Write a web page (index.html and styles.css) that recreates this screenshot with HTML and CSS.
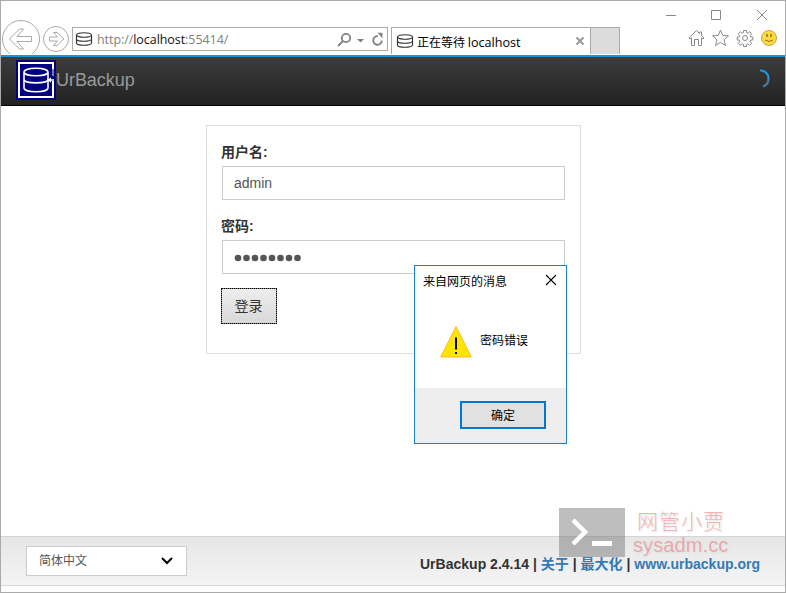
FILE: index.html
```html
<!DOCTYPE html>
<html lang="zh-CN">
<head>
<meta charset="utf-8">
<title>UrBackup</title>
<link rel="stylesheet" href="styles.css">
</head>
<body>
<svg class="defs" width="0" height="0">
  <symbol id="disk" viewBox="0 0 18 16">
    <path d="M1.500 4C1.500 1 16.500 1 16.500 4S1.500 7 1.500 4V12C1.500 15 16.500 15 16.500 12V4M1.500 8C1.500 11 16.500 11 16.500 8" fill="none" stroke="currentColor" stroke-width="1.200"/>
  </symbol>
</svg>
<div class="window">
  <div class="titlebar">
    <svg width="110" height="27" viewBox="0 0 110 27" fill="none" stroke="#888">
      <path d="M7 15.500h10M52.500 10.500h9v9h-9zM98 10l10 10M108 10l-10 10"/>
    </svg>
  </div>
  <div class="toolbar">
    <svg class="nav-buttons" width="71" height="35" viewBox="0 0 71 35" fill="none" stroke="#aaa">
      <circle cx="20" cy="19" r="18.500"/>
      <circle cx="55" cy="19" r="12.500"/>
      <path d="M8.500 19L18.500 9h4l-6.500 7.500h14.500v5H16l6.500 7.500h-4zM48.500 17h8l-4-4.500h3.500l7 6.500-7 6.500h-3.500l4-4.500h-8z"/>
    </svg>
    <div class="address">
      <svg class="disk-icon" width="18" height="16"><use href="#disk"/></svg>
      <span class="url">http://<b>localhost</b>:55414/</span>
      <svg class="address-tools" width="50" height="18" viewBox="0 0 50 18" fill="none" stroke="#808080" stroke-width="1.800">
        <circle cx="10" cy="7" r="4.200"/><path d="M7 10l-5 5"/>
        <path d="M21 8h7l-3.500 3.500z" fill="#808080" stroke="none"/>
        <path d="M42 5.200a4.300 4.300 0 1 0 3.800 4.300"/><path d="M41.500 1.500l5 .5v5.500z" fill="#808080" stroke="none"/>
      </svg>
    </div>
    <div class="tab">
      <svg class="disk-icon" width="18" height="16"><use href="#disk"/></svg>
      <span class="tab-title">正在等待 <i>localhost</i></span>
      <svg class="tab-close" width="10" height="10" viewBox="0 0 10 10" stroke="#999" stroke-width="2"><path d="M1.500 1.500l7 7M8.500 1.500l-7 7"/></svg>
    </div>
    <div class="new-tab"></div>
    <svg class="tools" width="92" height="20" viewBox="0 0 92 20" fill="none" stroke="#888">
      <path d="M1 10L8.500 2.500l3 3V4h2v3.500L16 10l-1 1-1.500-1v7.500h-3v-6h-4v6h-3V10L2 11z"/>
      <path d="M32.500 2l2.300 5.500 5.700.3-4.500 4 1.500 5.700-5-3.200-5 3.200 1.500-5.700-4.500-4 5.700-.3z"/>
      <circle cx="57" cy="10" r="2.500"/>
      <path d="M55.500 2.500h3v2l1.500.7 1.700-1.500 2 2-1.500 1.800.6 1.500h2v3h-2l-.6 1.500 1.500 1.800-2 2-1.700-1.500-1.500.7v2h-3v-2l-1.500-.7-1.700 1.500-2-2 1.500-1.800-.6-1.500h-2V9h2l.6-1.500-1.500-1.800 2-2L54 5.200l1.500-.7z"/>
      <circle cx="81" cy="10" r="7.500" fill="#ffda3f" stroke="#c8a24a"/>
      <path d="M79 6v3M83 6v3" stroke="#8b6d28" stroke-width="1.500"/><path d="M77 12q4 3 8 0" stroke="#8b6d28"/>
    </svg>
  </div>
  <header class="navbar">
    <svg class="logo" width="40" height="40" viewBox="0 0 40 40">
      <path fill="#000080" d="M0 0h40v40H0z"/>
      <path d="M37 21v16H3V3h34v7" fill="none" stroke="#fff" stroke-width="2"/>
      <path d="M36 9h2v7h-2z" fill="#7777bd"/>
      <path d="M8 12C8 7 32 7 32 12S8 17 8 12V28C8 33 32 33 32 28V12M8 19.500C8 24 32 24 32 19.500M32 20h6" fill="none" stroke="#fff" stroke-width="1.600"/>
      <path d="M31 20l4-2.500v5z" fill="#fff"/>
    </svg>
    <span class="brand">UrBackup</span>
    <svg class="spinner" width="14" height="20" viewBox="0 0 14 20" fill="none" stroke-width="2.200"><path d="M2 1.500A8 8 0 0 1 10.500 10" stroke="#2196dc"/><path d="M10.500 10A8 8 0 0 1 5 17.500" stroke="#4779a4"/></svg>
  </header>
  <main class="content">
    <form class="login">
      <label>用户名:</label>
      <div class="field">admin</div>
      <label>密码:</label>
      <div class="field password"><svg width="70" height="8" viewBox="0 0 70 8" fill="#555"><circle cx="4" cy="4" r="3.300"/><circle cx="12.500" cy="4" r="3.300"/><circle cx="21" cy="4" r="3.300"/><circle cx="29.500" cy="4" r="3.300"/><circle cx="38" cy="4" r="3.300"/><circle cx="46.500" cy="4" r="3.300"/><circle cx="55" cy="4" r="3.300"/><circle cx="63.500" cy="4" r="3.300"/></svg></div>
      <button class="submit" type="button">登录</button>
    </form>
  </main>
  <footer class="footer">
    <div class="language"><span>简体中文</span><svg width="12" height="8" viewBox="0 0 12 8" fill="none" stroke="#000" stroke-width="2"><path d="M1 1l5 5 5-5"/></svg></div>
    <div class="links">UrBackup 2.4.14 | <a>关于</a> | <a>最大化</a> | <a>www.urbackup.org</a></div>
  </footer>
  <div class="watermark">
    <svg width="66" height="49" viewBox="0 0 66 49"><path fill="#777" fill-opacity=".48" d="M0 0h66v49H0z"/><path d="M14 12l12 12-12 12" fill="none" stroke="#fff" stroke-width="4.500"/><path d="M33 33h20v5H33z" fill="#fff"/></svg>
    <div class="watermark-text"><span class="wm-name">网管小贾</span><span class="wm-site">sysadm.cc</span></div>
  </div>
  <div class="dialog">
    <div class="dialog-title"><span>来自网页的消息</span><svg width="12" height="12" viewBox="0 0 12 12" stroke="#000" stroke-width="1.100"><path d="M1 1l10 10M11 1L1 11"/></svg></div>
    <div class="dialog-body">
      <svg width="32" height="33" viewBox="0 0 32 33"><path d="M16 1.500L31.300 32H.7z" fill="#ffe500" stroke="#fdb924"/><path d="M15 12.500h2v12h-2zM15 27h2v2h-2z"/></svg>
      <span>密码错误</span>
    </div>
    <div class="dialog-footer"><button class="ok" type="button">确定</button></div>
  </div>
</div>
</body>
</html>
```
FILE: styles.css
```css
* { box-sizing: border-box; }
body { margin: 0; width: 786px; height: 593px; overflow: hidden; background: #fff; font-family: "Liberation Sans", "Noto Sans CJK SC", sans-serif; font-size: 14px; color: #333; }
svg { display: block; flex: none; }
.defs { position: absolute; }
.window { position: relative; width: 786px; height: 593px; border: 1px solid #aaa; display: flex; flex-direction: column; background: #fff; }
.titlebar { height: 26px; display: flex; justify-content: flex-end; padding: 0 16px 0 0; flex: none; }
.titlebar svg { margin-top: -1px; }
.toolbar { height: 28px; flex: none; display: flex; align-items: flex-start; }
.nav-buttons { height: 35px; margin: -7px 0 0; clip-path: inset(0 0 1px 0); }
.address { width: 316px; height: 24px; border: 1px solid #aaa; display: flex; align-items: center; padding: 0 1px 0 2px; margin-right: 3px; }
.disk-icon { color: #333; }
.url { margin: 2px 0 0 4px; font: 12.5px/20px "Open Sans", sans-serif; color: #808080; letter-spacing: -0.06px; white-space: nowrap; }
.url b { font-weight: 400; color: #111; }
.address-tools { margin: 1px 0 0 auto; }
.tab { width: 200px; height: 27px; border: 1px solid #aaa; border-bottom: 0; display: flex; align-items: center; padding: 0 5px 0 4px; }
.tab-title { margin: 1px 0 0 3px; font: 12px/20px "Noto Sans CJK SC", sans-serif; color: #000; white-space: nowrap; }
.tab-title i { font: 12.6px "Open Sans", sans-serif; }
.tab-close { margin-left: auto; }
.new-tab { width: 29px; height: 27px; background: #dcdcdc; border: 1px solid #aaa; border-width: 1px 1px 0 0; }
.tools { margin: 1px 5px 0 auto; width: 92px; }
.navbar { height: 51px; flex: none; display: flex; align-items: flex-start; border-top: 2px solid #1c94d8; border-bottom: 1px solid #000; background: linear-gradient(#3c3c3c, #222); padding: 3px 13px 0 15px; }
.brand { font-size: 18px; line-height: 40px; color: #999; letter-spacing: -0.05px; }
.spinner { margin: 9px 0 0 auto; }
.content { flex: 1; padding: 19px 0 0 205px; }
.login { width: 375px; height: 229px; border: 1px solid #ddd; padding: 16px 15px 0; }
.login label { display: block; font-weight: 700; line-height: 20px; height: 24px; margin-left: -1px; }
.field { height: 34px; border: 1px solid #ccc; padding: 0 11px; line-height: 32px; color: #555; margin-bottom: 16px; }
.password { display: flex; align-items: center; margin-bottom: 14px; padding-top: 2px; }
.submit { display: block; width: 56px; height: 36px; margin-left: -1px; border: 1px solid #777; outline: 1px dotted #000; outline-offset: -1px; background: linear-gradient(#eee, #d8d8d8); font: 14px/34px "Liberation Sans", "Noto Sans CJK SC", sans-serif; color: #333; padding: 0 1px 0 0; }
.footer { height: 50px; flex: none; margin-bottom: 6px; border: 1px solid #d4d4d4; border-width: 1px 0; background: linear-gradient(#e6e6e6, #f4f4f4); display: flex; justify-content: space-between; padding: 9px 25px 0; }
.language { width: 161px; height: 30px; border: 1px solid #ccc; background: #fff; display: flex; align-items: center; justify-content: space-between; padding: 0 13px 0 12px; font-size: 12px; color: #555; }
.language span { margin-top: -3px; }
.links { font-weight: 700; line-height: 20px; padding-top: 8px; white-space: nowrap; letter-spacing: 0.01px; }
.links a { color: #337ab7; }
.watermark { position: absolute; left: 558px; top: 507px; display: flex; }
.watermark-text { display: flex; flex-direction: column; padding-left: 8px; color: rgba(240, 110, 110, 0.5); text-shadow: 1px 1px 2px #ddd; white-space: nowrap; }
.wm-name { font: 21px/24px "Noto Sans CJK SC", sans-serif; font-weight: 300; padding-left: 4px; letter-spacing: 1px; }
.wm-site { font-size: 20px; line-height: 26px; letter-spacing: 0.1px; }
.dialog { position: absolute; left: 413px; top: 264px; width: 153px; height: 179px; border: 1px solid #1a7fd0; background: #fff; font: 12px "Noto Sans CJK SC", sans-serif; color: #000; display: flex; flex-direction: column; }
.dialog-title { height: 28px; display: flex; align-items: center; justify-content: space-between; padding: 0 9px 0 8px; }
.dialog-body { flex: 1; display: flex; gap: 8px; padding: 31px 0 0 25px; line-height: 30px; }
.dialog-footer { height: 55px; background: #eee; display: flex; justify-content: flex-end; padding: 13px 20px 0 0; }
.ok { width: 86px; height: 28px; border: 2px solid #0078d7; background: #e1e1e1; font: 12px "Noto Sans CJK SC", sans-serif; color: #000; padding: 0 0 2px; }
```
